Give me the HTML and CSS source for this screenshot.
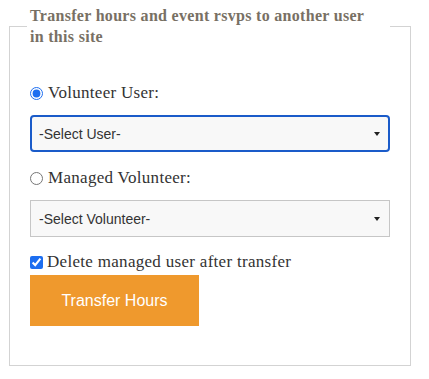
FILE: index.html
```html
<!DOCTYPE html>
<html lang="en">
<head>
<meta charset="utf-8">
<title>Transfer hours</title>
<link rel="stylesheet" href="styles.css">
</head>
<body>
<div class="page">
  <fieldset class="box">
    <legend class="box-title">Transfer hours and event rsvps to another user<br>in this site</legend>
    <label class="choice choice-first">
      <input type="radio" name="mode" class="radio" checked>
      <span>Volunteer User:</span>
    </label>
    <div class="select-wrap">
      <select class="select select-active"><option>-Select User-</option></select>
      <span class="arrow"></span>
    </div>
    <label class="choice choice-second">
      <input type="radio" name="mode" class="radio">
      <span>Managed Volunteer:</span>
    </label>
    <div class="select-wrap">
      <select class="select"><option>-Select Volunteer-</option></select>
      <span class="arrow"></span>
    </div>
    <label class="choice choice-check">
      <input type="checkbox" class="check" checked>
      <span>Delete managed user after transfer</span>
    </label>
    <button class="btn" type="button">Transfer Hours</button>
  </fieldset>
</div>
</body>
</html>
```
FILE: styles.css
```css
html, body {
  margin: 0;
  padding: 0;
  background: #fff;
}
.page {
  padding: 5px 0 0 9px;
  width: 402px;
}
.box {
  margin: 0;
  border: 1px solid #d3d3d3;
  padding: 0 20px 39px 20px;
  min-width: 0;
}
.box-title {
  font-family: "Liberation Serif", "DejaVu Serif", serif;
  font-weight: bold;
  font-size: 16px;
  letter-spacing: 0.3px;
  line-height: 21px;
  color: #787064;
  padding: 0 3px;
  margin-left: -3px;
  width: 363px;
  box-sizing: border-box;
  white-space: nowrap;
}
.choice {
  display: flex;
  align-items: center;
  height: 24px;
  font-family: "Liberation Serif", "DejaVu Serif", serif;
  font-size: 17px;
  letter-spacing: 0.3px;
  color: #333;
}
.choice-first { margin-top: 34px; }
.choice-second { margin-top: 14px; }
.choice-check { margin-top: 13px; }
.radio, .check {
  margin: 0 5px 0 0;
  width: 13px;
  height: 13px;
  accent-color: #1d6ef0;
}
.check { margin-right: 4px; }
.select-wrap {
  position: relative;
  margin-top: 10px;
}
.select {
  display: block;
  width: 100%;
  height: 37px;
  -webkit-appearance: none;
  appearance: none;
  background: #f8f8f8;
  border: 1px solid #c6c6c6;
  border-radius: 0;
  padding: 0 8px;
  font-family: "Liberation Sans", Arial, sans-serif;
  font-size: 14px;
  color: #333;
  outline: none;
}
.select-active {
  border: 2px solid #1a5bc9;
  border-radius: 4px;
  padding: 0 7px;
}
.arrow {
  position: absolute;
  right: 10px;
  top: 17px;
  width: 0;
  height: 0;
  border-left: 3px solid transparent;
  border-right: 3px solid transparent;
  border-top: 4px solid #222;
}
.btn {
  display: block;
  margin-top: 1px;
  width: 169px;
  height: 51px;
  border: 0;
  background: #ef992d;
  color: #fff;
  font-family: "Liberation Sans", Arial, sans-serif;
  font-size: 16px;
  padding: 0;
}
```
